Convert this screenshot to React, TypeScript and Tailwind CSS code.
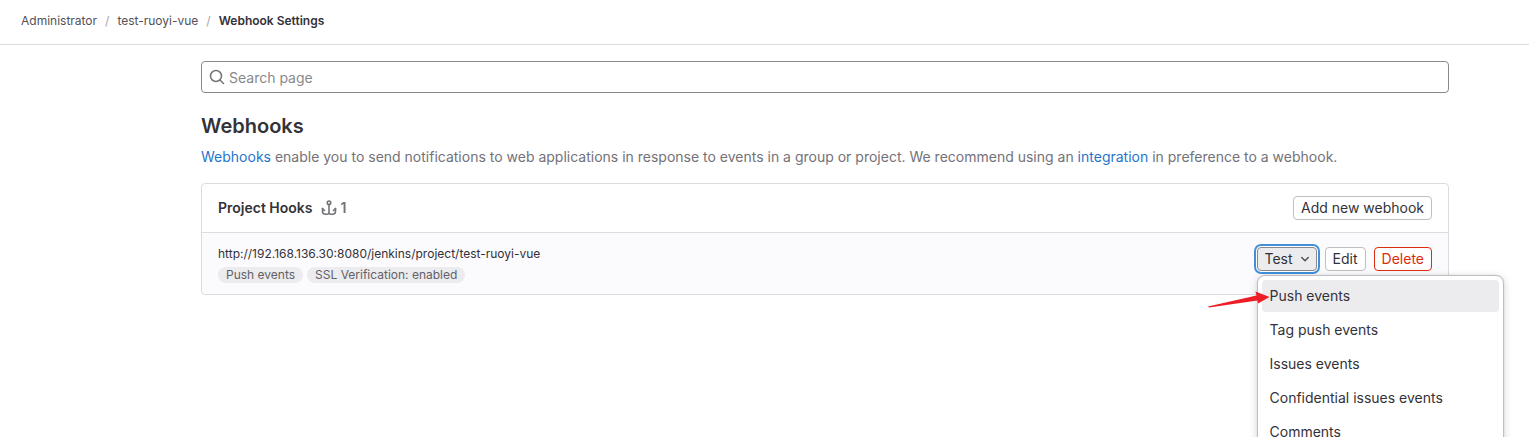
import React from "react";

const testEvents = ["Push events", "Tag push events", "Issues events", "Confidential issues events", "Comments"];

const smallButton =
  "h-6 rounded-sm bg-white px-[7px] text-sm leading-4 whitespace-nowrap";

function SearchIcon() {
  return (
    <svg className="pointer-events-none absolute top-2 left-2 size-4 text-[#737278]" viewBox="0 0 16 16" fill="none" stroke="currentColor" strokeWidth="1.5" strokeLinecap="round" aria-hidden="true">
      <circle cx="7" cy="7" r="5.5" />
      <path d="M11 11l3.5 3.5" />
    </svg>
  );
}

function HookIcon() {
  return (
    <svg className="size-4" viewBox="0 0 16 16" fill="none" stroke="currentColor" strokeWidth="1.6" strokeLinecap="round" strokeLinejoin="round" aria-hidden="true">
      <circle cx="8" cy="2.75" r="1.75" />
      <path d="M8 4.5v8a1.75 1.75 0 0 0 1.75 1.75h1.75a3 3 0 0 0 3-3V8.5M8 12.5a1.75 1.75 0 0 1-1.75 1.75H4.5a3 3 0 0 1-3-3V8.5" />
      <path d="M1.5 8.5l2 2M14.5 8.5l-2 2" />
    </svg>
  );
}

function ChevronIcon() {
  return (
    <svg className="size-4 text-[#535158]" viewBox="0 0 16 16" fill="none" stroke="currentColor" strokeWidth="1.5" strokeLinecap="round" strokeLinejoin="round" aria-hidden="true">
      <path d="M4.75 6.5L8 9.75l3.25-3.25" />
    </svg>
  );
}

function Breadcrumbs() {
  return (
    <header className="border-b border-[#dcdcde] px-5 py-3">
      <nav aria-label="Breadcrumbs">
        <ol className="flex h-5 items-center gap-2 pb-0.5 pl-px text-xs leading-4 text-[#535158]">
          <li><a href="#administrator">Administrator</a></li>
          <li className="text-[#a4a3a8]" aria-hidden="true">/</li>
          <li><a href="#project">test-ruoyi-vue</a></li>
          <li className="text-[#a4a3a8]" aria-hidden="true">/</li>
          <li><a href="#webhooks" className="font-semibold text-[#333238]" aria-current="page">Webhook Settings</a></li>
        </ol>
      </nav>
    </header>
  );
}

function TestDropdown() {
  return (
    <div className="relative">
      <button
        type="button"
        aria-haspopup="menu"
        aria-expanded="true"
        className="flex h-6 items-center gap-1 rounded-sm border border-[#89888d] bg-[#ececef] pr-[3px] pl-[7px] text-sm leading-4 ring-2 ring-[#428fdc] ring-offset-1 ring-offset-white"
      >
        Test
        <ChevronIcon />
      </button>
      <div role="menu" className="absolute top-full left-0 z-10 mt-1 w-[247px] rounded-lg border border-[#bfbfc3] bg-white p-1 pb-12 shadow-[0_0_2px_rgba(5,5,6,0.1),0_2px_8px_rgba(5,5,6,0.16)]">
        <div className="flex flex-col gap-0.5">
          {testEvents.map((event, index) => (
            <button
              key={event}
              type="button"
              role="menuitem"
              className={`h-8 rounded px-2 text-left text-sm leading-4 ${index === 0 ? "bg-[#ececef]" : "hover:bg-[#ececef]"}`}
            >
              {event}
            </button>
          ))}
        </div>
        <svg className="pointer-events-none absolute top-3 -left-[50px] h-5 w-[62px]" viewBox="0 0 62 20" fill="#ee1c25" aria-hidden="true">
          <path d="M0 18.4L48.5 7.4L47.5 3.6L61.5 9L50 15.5L49.5 12.6L1 19.4Z" />
        </svg>
      </div>
    </div>
  );
}

export default function App() {
  return (
    <div className="h-screen overflow-hidden bg-white font-['Inter','Liberation_Sans',sans-serif] text-[#333238]">
      <Breadcrumbs />
      <main className="pt-4 pr-20 pl-[201px]">
        <div className="relative">
          <SearchIcon />
          <input
            type="search"
            aria-label="Search page"
            placeholder="Search page"
            className="block h-8 w-full rounded border border-[#89888d] bg-white pr-2 pl-[27px] text-sm placeholder:text-[#89888d]"
          />
        </div>

        <h1 className="mt-5 text-xl leading-[26px] font-semibold">Webhooks</h1>
        <p className="mt-2 text-sm leading-5 text-[#737278]">
          <a href="#webhook-docs" className="text-[#1f75cb]">Webhooks</a> enable you to send notifications to web applications in response to events in a group or project. We recommend using an{" "}
          <a href="#integrations" className="text-[#1f75cb]">integration</a> in preference to a webhook.
        </p>

        <section className="mt-4 rounded border border-[#dcdcde]">
          <div className="flex h-12 items-center justify-between px-4">
            <h2 className="flex items-center gap-2 text-sm leading-4 font-semibold">
              Project Hooks
              <span className="flex items-center gap-1 text-[#737278]">
                <HookIcon />1
              </span>
            </h2>
            <button type="button" className={`${smallButton} border border-[#bfbfc3]`}>Add new webhook</button>
          </div>
          <div className="flex items-start justify-between rounded-b border-t border-[#dcdcde] bg-[#fbfafd] px-4 pt-3 pb-[11px]">
            <div>
              <div className="text-xs leading-[18px]">http://192.168.136.30:8080/jenkins/project/test-ruoyi-vue</div>
              <div className="mt-1 flex gap-1 text-xs leading-4 text-[#626168]">
                <span className="rounded-full bg-[#ececef] px-2">Push events</span>
                <span className="rounded-full bg-[#ececef] px-2">SSL Verification: enabled</span>
              </div>
            </div>
            <div className="flex gap-2 pt-0.5">
              <TestDropdown />
              <button type="button" className={`${smallButton} border border-[#bfbfc3]`}>Edit</button>
              <button type="button" className={`${smallButton} border border-[#dd2b0e] text-[#dd2b0e]`}>Delete</button>
            </div>
          </div>
        </section>
      </main>
    </div>
  );
}
